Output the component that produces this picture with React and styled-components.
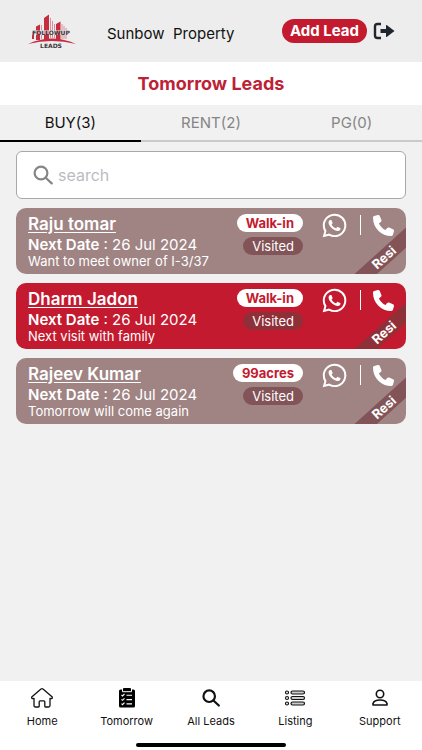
import React, { useState } from "react";
import styled, { createGlobalStyle } from "styled-components";
import { IoLogoWhatsapp } from "react-icons/io5";
import { FaPhone } from "react-icons/fa6";

const GlobalStyle = createGlobalStyle`
  * {
    box-sizing: border-box;
  }

  body {
    margin: 0;
    background: #f1f1f1;
    font-family: Inter, "Open Sans", sans-serif;
  }

  button, input {
    font-family: inherit;
  }
`;

const Page = styled.div`
  display: flex;
  flex-direction: column;
  min-height: 100vh;
`;

const Header = styled.header`
  display: grid;
  grid-template-columns: 77px 1fr auto auto;
  align-items: center;
  column-gap: 6px;
  height: 62px;
  padding: 0 27px 0 24px;
  background: #ededed;
`;

const Company = styled.span`
  padding-top: 5px;
  font-size: 15px;
  line-height: 20px;
  color: #111;
  white-space: pre;
`;

const AddButton = styled.button`
  height: 24px;
  padding: 0 8px;
  border: 0;
  border-radius: 12px;
  background: #c41a2f;
  color: #fff;
  font-size: 15px;
  font-weight: 700;
  line-height: 22px;
`;

const IconButton = styled.button`
  display: flex;
  padding: 0;
  border: 0;
  background: none;
  color: inherit;
`;

const Title = styled.h1`
  margin: 0;
  background: #fff;
  color: #bd2136;
  font-size: 18px;
  font-weight: 700;
  line-height: 43px;
  text-align: center;
`;

const Tabs = styled.div`
  display: grid;
  grid-template-columns: repeat(3, 1fr);
`;

const Tab = styled.button`
  height: 37px;
  padding: 0;
  border: 0;
  border-bottom: 2px solid ${props => (props.$active ? "#000" : "#cacaca")};
  background: none;
  color: ${props => (props.$active ? "#111" : "#858585")};
  font-size: 15px;
`;

const Content = styled.main`
  display: flex;
  flex: 1;
  flex-direction: column;
  gap: 9px;
  padding: 9px 16px;
`;

const SearchBox = styled.label`
  display: flex;
  align-items: center;
  gap: 5px;
  height: 48px;
  padding: 0 16px;
  border: 1px solid #a5a9a9;
  border-radius: 6px;
  background: #fff;
  color: #858585;
`;

const SearchInput = styled.input`
  flex: 1;
  min-width: 0;
  padding: 0;
  border: 0;
  outline: 0;
  background: none;
  font-size: 16px;

  &::placeholder {
    color: #bcbcc0;
    opacity: 1;
  }
`;

const Card = styled.article`
  position: relative;
  display: grid;
  grid-template-columns: 1fr auto auto;
  column-gap: 18px;
  height: 66px;
  padding: 6px 12px 0;
  border-radius: 10px;
  background: ${props => (props.$urgent ? "#c41a2f" : "#a08484")};
  color: #fff;
  overflow: hidden;
`;

const Details = styled.div`
  min-width: 0;
  white-space: nowrap;
`;

const LeadName = styled.a`
  display: block;
  color: inherit;
  font-size: 17px;
  font-weight: 600;
  line-height: 21px;
  text-underline-offset: 2px;
`;

const NextDate = styled.p`
  margin: 0;
  font-size: 15px;
  line-height: 19px;

  b {
    font-weight: 600;
  }
`;

const Note = styled.p`
  margin: 0;
  font-size: 13px;
  line-height: 14px;
`;

const Badges = styled.div`
  display: flex;
  flex-direction: column;
  align-items: flex-end;
  gap: 5px;
`;

const Badge = styled.span`
  padding: 0 9px;
  border-radius: 9px;
  background: ${props => props.$bg};
  color: ${props => props.$color};
  font-size: 13px;
  font-weight: ${props => (props.$bold ? 700 : 400)};
  line-height: 18px;
`;

const Actions = styled.div`
  display: flex;
  align-items: center;
  align-self: start;
  gap: 12px;
  height: 22px;
`;

const Divider = styled.span`
  width: 1px;
  height: 20px;
  background: #fff;
`;

const ActionLink = styled.a`
  display: flex;
  color: #fff;
`;

const Ribbon = styled.span`
  position: absolute;
  top: 42px;
  right: -18px;
  width: 80px;
  background: ${props => (props.$urgent ? "#8f3039" : "#825457")};
  font-size: 13px;
  font-weight: 700;
  line-height: 15px;
  text-align: center;
  transform: rotate(-42deg);
`;

const BottomNav = styled.nav`
  display: grid;
  grid-template-columns: repeat(5, 1fr);
  padding-top: 6px;
  background: #fff;
`;

const NavItem = styled.a`
  display: flex;
  flex-direction: column;
  align-items: center;
  height: 44px;
  color: #111;
  font-size: 11px;
  line-height: 16px;
  text-decoration: none;
`;

const NavIcon = styled.span`
  display: flex;
  align-items: center;
  height: 22px;
  margin-bottom: 4px;
`;

const HomeBar = styled.div`
  grid-column: 1 / -1;
  justify-self: center;
  width: 150px;
  height: 4px;
  margin: 12px 0 3px;
  border-radius: 2px;
  background: #000;
`;

const Logo = () => (
  <svg width="54" height="36" viewBox="0 0 54 36" role="img" aria-label="Followup Leads">
    <g fill="#c52c40">
      <path d="M12 13.5l4-2V27h-4zM20 5l5-3.5V27h-5zM32 11l4.5-2.5V27H32z" />
      <path d="M8 19l2-1v8H8z" />
      <path d="M4 31Q28 20 52 31Q28 25 4 31z" />
    </g>
    <path
      d="M17.5 12v14M26.5 5v21M28.5 8v18M30.5 11v15M38 11v15M40 13v13M42 15v11"
      stroke="#dc8f9a"
    />
    <rect x="7" y="17" width="40" height="5" fill="#ededed" opacity=".6" />
    <g fill="#3d3639" fontFamily="DejaVu Sans, sans-serif" fontWeight="700" textAnchor="middle">
      <text x="27" y="22" fontSize="6">FOLLOWUP</text>
      <text x="27" y="35" fontSize="6">LEADS</text>
    </g>
  </svg>
);

const LogoutIcon = () => (
  <svg width="22" height="18" viewBox="0 0 22 18" fill="none">
    <path d="M8 2H4.5Q2 2 2 4.500v9Q2 16 4.500 16H8" stroke="#20262d" strokeWidth="2.4" />
    <path d="M7.5 7H13V3.5Q13 2.5 14 3.2L21.5 9L14 14.8Q13 15.5 13 14.5V11H7.5z" fill="#20262d" />
  </svg>
);

const SearchIcon = ({ size = 20, stroke = 2.2 }) => (
  <svg width={size} height={size} viewBox="0 0 20 20" fill="none" stroke="currentColor" strokeWidth={stroke}>
    <circle cx="8" cy="8" r="6.4" />
    <path d="M12.7 12.7L18.7 18.4" strokeLinecap="round" />
  </svg>
);

const HomeIcon = () => (
  <svg width="24" height="22" viewBox="0 0 24 22" fill="none" stroke="#111" strokeWidth="1.3" strokeLinejoin="round">
    <path d="M11 2.1Q12 1.2 13 2.1L22.3 10.1Q22.8 12 20 11.5V18.5Q20 20 18.5 20H15.5Q14.8 20 14.8 19.2V14.8Q14.8 13.8 13.8 13.8H10.2Q9.2 13.8 9.2 14.8V19.2Q9.2 20 8.5 20H5.5Q4 20 4 18.5V11.5Q1.2 12 1.7 10.1z" />
  </svg>
);

const ClipboardIcon = () => (
  <svg width="18" height="22" viewBox="0 0 18 22" fill="none">
    <rect x="1" y="2.5" width="16" height="18" rx="1.5" fill="#000" />
    <path d="M4.5 1.5v3.2h9V1.5" stroke="#fff" />
    <rect x="5" y="1" width="8" height="3" rx="1" fill="#000" />
    <g stroke="#fff" strokeWidth="1.1">
      <path d="M3.5 8l1 1 2-2M3.5 12.3l1 1 2-2M3.5 16.6l1 1 2-2" />
      <path d="M8.5 8.3H14M8.5 12.6H14M8.5 16.9H14" />
    </g>
  </svg>
);

const ListIcon = () => (
  <svg width="22" height="22" viewBox="0 0 22 22" fill="none" stroke="#111" strokeWidth="1.2">
    {[5.5, 11, 16.5].map(y => (
      <React.Fragment key={y}>
        <rect x="7" y={y - 1.5} width="13.5" height="3" rx="1.5" fill="#ccc" />
        <circle cx="3" cy={y} r="1.5" />
      </React.Fragment>
    ))}
  </svg>
);

const PersonIcon = () => (
  <svg width="18" height="22" viewBox="0 0 18 22" fill="none" stroke="#111" strokeWidth="1.6">
    <circle cx="9" cy="7" r="3.7" />
    <path d="M2 18V16.5Q3 13 9 13Q15 13 16 16.5V18z" strokeLinejoin="round" />
  </svg>
);

const tabs = ["BUY(3)", "RENT(2)", "PG(0)"];

const leads = [
  { name: "Raju tomar", note: "Want to meet owner of I-3/37", source: "Walk-in" },
  { name: "Dharm Jadon", note: "Next visit with family", source: "Walk-in", urgent: true },
  { name: "Rajeev Kumar", note: "Tomorrow will come again", source: "99acres" }
];

const navItems = [
  { label: "Home", icon: <HomeIcon /> },
  { label: "Tomorrow", icon: <ClipboardIcon /> },
  { label: "All Leads", icon: <SearchIcon size={18} stroke={2.4} /> },
  { label: "Listing", icon: <ListIcon /> },
  { label: "Support", icon: <PersonIcon /> }
];

const LeadCard = ({ name, note, source, urgent }) => (
  <Card $urgent={urgent}>
    <Details>
      <LeadName href="#lead">{name}</LeadName>
      <NextDate><b>Next Date</b> : 26 Jul 2024</NextDate>
      <Note>{note}</Note>
    </Details>
    <Badges>
      <Badge $bg="#fff" $color="#c41a2f" $bold>{source}</Badge>
      <Badge $bg={urgent ? "#8f3039" : "#825457"} $color="#fff">Visited</Badge>
    </Badges>
    <Actions>
      <ActionLink href="#whatsapp" aria-label={`WhatsApp ${name}`}>
        <IoLogoWhatsapp size={27} />
      </ActionLink>
      <Divider />
      <ActionLink href="#call" aria-label={`Call ${name}`}>
        <FaPhone size={21} />
      </ActionLink>
    </Actions>
    <Ribbon $urgent={urgent}>Resi</Ribbon>
  </Card>
);

const App = () => {
  const [active, setActive] = useState(0);
  const [query, setQuery] = useState("");

  return (
    <Page>
      <GlobalStyle />
      <Header>
        <Logo />
        <Company>Sunbow  Property</Company>
        <AddButton>Add Lead</AddButton>
        <IconButton aria-label="Log out"><LogoutIcon /></IconButton>
      </Header>
      <Title>Tomorrow Leads</Title>
      <Tabs role="tablist">
        {tabs.map((tab, i) => (
          <Tab
            key={tab}
            role="tab"
            aria-selected={i === active}
            $active={i === active}
            onClick={() => setActive(i)}
          >
            {tab}
          </Tab>
        ))}
      </Tabs>
      <Content>
        <SearchBox>
          <SearchIcon />
          <SearchInput
            aria-label="search"
            placeholder="search"
            value={query}
            onChange={e => setQuery(e.target.value)}
          />
        </SearchBox>
        {leads.map(lead => <LeadCard key={lead.name} {...lead} />)}
      </Content>
      <BottomNav>
        {navItems.map(({ label, icon }) => (
          <NavItem key={label} href={`#${label}`}>
            <NavIcon>{icon}</NavIcon>
            <span>{label}</span>
          </NavItem>
        ))}
        <HomeBar />
      </BottomNav>
    </Page>
  );
};

export default App;
